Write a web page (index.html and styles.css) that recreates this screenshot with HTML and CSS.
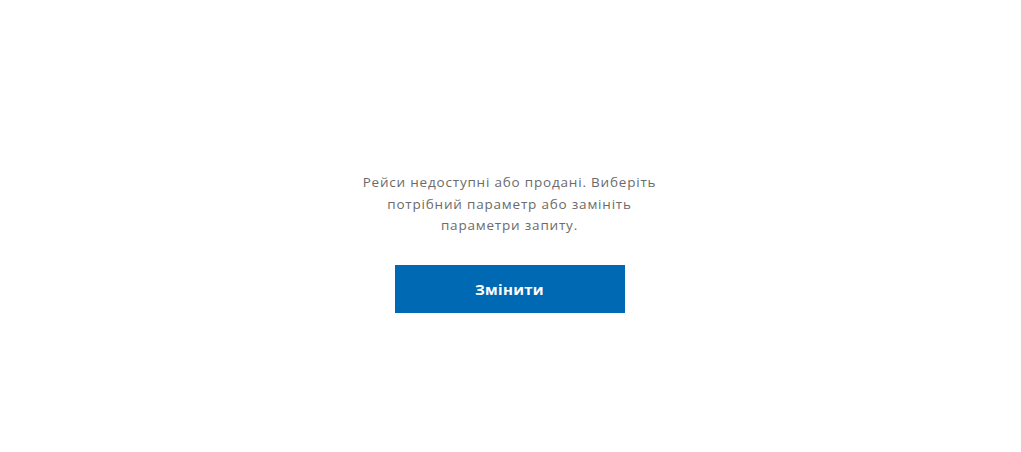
FILE: index.html
```html
<!DOCTYPE html>
<html lang="uk">
<head>
<meta charset="utf-8">
<link rel="stylesheet" href="styles.css">
</head>
<body>
<main class="page">
  <div class="empty">
    <p class="message">Рейси недоступні або продані. Виберіть потрібний параметр або замініть параметри запиту.</p>
    <button class="change-btn">Змінити</button>
  </div>
</main>
</body>
</html>
```
FILE: styles.css
```css
html, body {
  margin: 0;
  padding: 0;
  background: #ffffff;
}
.page {
  height: 452px;
  display: flex;
  justify-content: center;
}
.empty {
  display: flex;
  flex-direction: column;
  align-items: center;
  padding-top: 172px;
  margin-left: -2px;
}
.message {
  margin: 0;
  width: 310px;
  text-align: center;
  font-family: "Open Sans", sans-serif;
  font-size: 13.5px;
  letter-spacing: 0.8px;
  line-height: 21.5px;
  color: #6b6b6b;
}
.change-btn {
  margin-top: 28px;
  width: 230px;
  height: 48px;
  border: 0;
  background: #0069b4;
  color: #ffffff;
  font-family: "Open Sans", sans-serif;
  font-weight: 700;
  font-size: 15px;
  letter-spacing: 0.3px;
  cursor: pointer;
}
```
